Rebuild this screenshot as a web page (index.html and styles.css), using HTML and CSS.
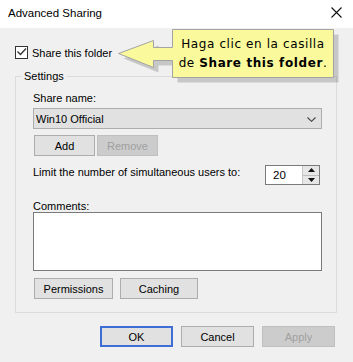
FILE: index.html
```html
<!DOCTYPE html>
<html>
<head>
<meta charset="utf-8">
<link rel="stylesheet" href="styles.css">
</head>
<body>
<div class="window">
  <div class="titlebar">
    <span class="title">Advanced Sharing</span>
    <svg class="close" width="11" height="11" viewBox="0 0 11 11"><path d="M0.5 0.5 L10.5 10.5 M10.5 0.5 L0.5 10.5" stroke="#111" stroke-width="1.1" fill="none"/></svg>
  </div>
  <div class="body">
    <div class="check-row">
      <span class="checkbox"><svg width="11" height="11" viewBox="0 0 11 11"><path d="M1.5 4.5 L4.5 7.5 L10 1.5" stroke="#333" stroke-width="1.3" fill="none"/></svg></span>
      <span class="check-label">Share this folder</span>
    </div>
    <div class="group">
      <span class="legend">Settings</span>
      <div class="label">Share name:</div>
      <div class="combo"><span>Win10 Official</span><svg class="chev" width="9" height="5" viewBox="0 0 9 5"><path d="M0.5 0.5 L4.5 4.3 L8.5 0.5" stroke="#444" stroke-width="1.1" fill="none"/></svg></div>
      <div class="btn-row">
        <div class="btn small">Add</div>
        <div class="btn small disabled">Remove</div>
      </div>
      <div class="limit-row">
        <span class="limit-text">Limit the number of simultaneous users to:</span>
        <div class="spin">
          <span class="spin-val">20</span>
          <div class="spin-btns">
            <div class="spin-btn"><svg width="7" height="4" viewBox="0 0 7 4"><path d="M0 4 L3.5 0 L7 4 Z" fill="#111"/></svg></div>
            <div class="spin-btn"><svg width="7" height="4" viewBox="0 0 7 4"><path d="M0 0 L3.5 4 L7 0 Z" fill="#111"/></svg></div>
          </div>
        </div>
      </div>
      <div class="label comments-label">Comments:</div>
      <div class="textarea"></div>
      <div class="btn-row lower">
        <div class="btn perm">Permissions</div>
        <div class="btn cache">Caching</div>
      </div>
    </div>
    <div class="footer">
      <div class="btn dlg default">OK</div>
      <div class="btn dlg">Cancel</div>
      <div class="btn dlg disabled">Apply</div>
    </div>
  </div>
  <svg class="callout-shape" width="240" height="65" viewBox="0 0 240 65">
    <polygon points="13.5,33.5 48.5,20.5 48.5,27.5 67.5,27.5 67.5,9.5 228.5,9.5 228.5,57.5 67.5,57.5 67.5,40.5 48.5,40.5 48.5,47.5" fill="#000" fill-opacity="0.17"/>
    <polygon points="8.5,28.5 43.5,15.5 43.5,22.5 62.5,22.5 62.5,4.5 223.5,4.5 223.5,52.5 62.5,52.5 62.5,35.5 43.5,35.5 43.5,42.5" fill="#fafa9c" stroke="#a3a3a3" stroke-width="1"/>
  </svg>
  <div class="callout-text">
    <span>Haga clic en la casilla</span>
    <span>de <b>Share this folder</b>.</span>
  </div>
</div>
</body>
</html>
```
FILE: styles.css
```css
html, body {
  margin: 0;
  padding: 0;
}
body {
  width: 353px;
  height: 362px;
  overflow: hidden;
  font-family: "Liberation Sans", Arial, sans-serif;
  font-size: 11px;
  color: #000;
  white-space: nowrap;
}
.window {
  position: relative;
  width: 353px;
  height: 362px;
  background: #f0f0f0;
}
.titlebar {
  height: 28px;
  box-sizing: border-box;
  background: #fff;
  display: flex;
  align-items: flex-start;
  justify-content: space-between;
  padding: 5px 11px 0 8px;
}
.title {
  line-height: 16px;
  font-size: 11.5px;
}
.close {
  margin-top: 2px;
}
.body {
  display: flex;
  flex-direction: column;
}
.check-row {
  margin: 18px 0 0 15px;
  height: 13px;
  display: flex;
  align-items: center;
  gap: 4px;
}
.checkbox {
  width: 11px;
  height: 11px;
  border: 1px solid #333;
  background: #fff;
  display: flex;
}
.check-label {
  line-height: 16px;
}
.group {
  position: relative;
  margin: 17px 16px 0 15px;
  border: 1px solid #dcdcdc;
  padding: 13px 14px 13px 17px;
  display: flex;
  flex-direction: column;
}
.legend {
  position: absolute;
  top: -8px;
  left: 6px;
  padding: 0 2px;
  line-height: 14px;
  background: #f0f0f0;
}
.label {
  line-height: 16px;
}
.combo {
  margin-top: 2px;
  height: 21px;
  box-sizing: border-box;
  border: 1px solid #adadad;
  background: #e1e1e1;
  display: flex;
  align-items: center;
  justify-content: space-between;
  padding: 0 5px 0 2px;
}
.chev {
  margin-top: 1px;
}
.btn-row {
  margin-top: 6px;
  display: flex;
  gap: 2px;
  padding-left: 1px;
}
.btn {
  height: 21px;
  box-sizing: border-box;
  border: 1px solid #adadad;
  background: #e1e1e1;
  display: flex;
  align-items: center;
  justify-content: center;
}
.btn.disabled {
  background: #cccccc;
  border-color: #bfbfbf;
  color: #a0a0a0;
}
.btn.small {
  width: 61px;
}
.limit-row {
  margin-top: 8px;
  display: flex;
  align-items: flex-start;
  justify-content: space-between;
}
.limit-text {
  line-height: 16px;
}
.spin {
  flex-shrink: 0;
  margin-top: 1px;
  margin-right: 2px;
  width: 55px;
  height: 20px;
  box-sizing: border-box;
  border: 1px solid #7a7a7a;
  background: #fff;
  display: flex;
  justify-content: space-between;
}
.spin-val {
  padding-left: 7px;
  line-height: 19px;
  font-size: 11.5px;
}
.spin-btns {
  width: 16px;
  display: flex;
  flex-direction: column;
  border-left: 1px solid #c8c8c8;
}
.spin-btn {
  flex: 1;
  background: #e6e6e6;
  display: flex;
  align-items: center;
  justify-content: center;
}
.spin-btn + .spin-btn {
  border-top: 1px solid #bdbdbd;
}
.comments-label {
  margin-top: 15px;
  line-height: 12px;
}
.textarea {
  height: 59px;
  box-sizing: border-box;
  border: 1px solid #7a7a7a;
  background: #fff;
}
.btn-row.lower {
  margin-top: 7px;
  gap: 7px;
}
.btn.perm {
  width: 79px;
}
.btn.cache {
  width: 78px;
}
.footer {
  margin-top: 13px;
  display: flex;
  justify-content: flex-end;
  gap: 8px;
  padding-right: 18px;
}
.btn.dlg {
  width: 73px;
}
.btn.default {
  border: 2px solid #3f6fd4;
}
.callout-shape {
  position: absolute;
  left: 110px;
  top: 25px;
}
.callout-text {
  position: absolute;
  left: 172px;
  top: 29px;
  width: 162px;
  height: 49px;
  display: flex;
  flex-direction: column;
  align-items: center;
  justify-content: center;
  font-family: "DejaVu Sans", Verdana, sans-serif;
  font-size: 12px;
  line-height: 19px;
  letter-spacing: 0.6px;
  color: #000;
}
.callout-text b {
  font-weight: bold;
}
```
